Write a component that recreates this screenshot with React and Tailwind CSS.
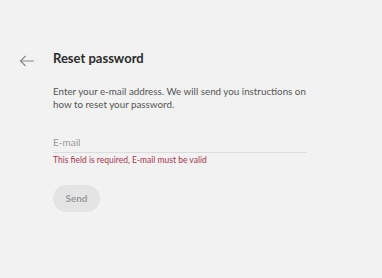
import React, { useState } from 'react';

const font = { fontFamily: '"Lato", "Open Sans", sans-serif' };

export default function App() {
  const [email, setEmail] = useState('');

  return (
    <div className="w-[382px] h-[278px] bg-[#f2f2f2] text-[#333]" style={font}>
      <div className="flex pt-[50px] pl-[19px]">
        <button className="w-[16px] h-[16px] mt-[3px] mr-[18px] text-[#8a8a8a]">
          <svg width="16" height="16" viewBox="0 0 16 16" fill="none" stroke="currentColor" strokeWidth="1.2">
            <path d="M15 8H1.5M6.5 3L1.5 8l5 5" />
          </svg>
        </button>
        <div className="flex flex-col w-[262px]">
          <h1 className="text-[13px] font-bold leading-[16px] text-[#2b2b2b]">Reset password</h1>
          <p className="mt-[19px] text-[9.8px] leading-[13px] text-[#555]">
            Enter your e-mail address. We will send you instructions on how to reset your password.
          </p>
          <input
            value={email}
            onChange={(e) => setEmail(e.target.value)}
            placeholder="E-mail"
            className="mt-[20px] w-[254px] h-[22px] text-[10px] bg-transparent border-b border-[#dcdcdc] outline-none placeholder:text-[#9a9a9a]"
          />
          <span className="mt-[2px] text-[8.5px] leading-[10px] text-[#a8324f]">
            This field is required, E-mail must be valid
          </span>
          <button className="mt-[20px] w-[47px] h-[27px] rounded-full bg-[#e4e4e4] text-[10px] font-bold text-[#9a9a9a]">
            Send
          </button>
        </div>
      </div>
    </div>
  );
}
